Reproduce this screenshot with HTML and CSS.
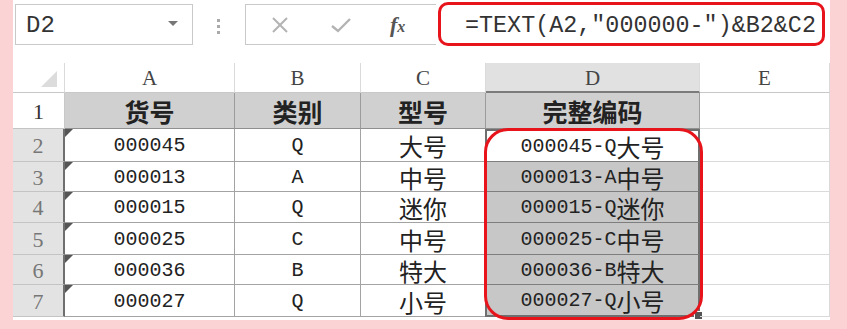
FILE: index.html
```html
<!DOCTYPE html>
<html lang="zh-CN">
<head>
  <meta charset="UTF-8">
  <title>完整编码</title>
  <link rel="stylesheet" href="styles.css">
</head>
<body>
  <div class="panel">
    <!-- 名称框和编辑栏 -->
    <div class="topbar">
      <div class="namebox">
        <span>D2</span>
        <span class="arrow"></span>
      </div>
      <div class="dots"><i></i><i></i><i></i></div>
      <div class="tools">
        <svg class="ico" width="20" height="16" viewBox="0 0 20 16"><path d="M3 1 L17 15 M17 1 L3 15" stroke="#b3b3b3" stroke-width="2" fill="none"/></svg>
        <svg class="ico" width="22" height="16" viewBox="0 0 22 16"><path d="M2 9 L8 14 L20 2" stroke="#b3b3b3" stroke-width="2.4" fill="none"/></svg>
        <span class="fx">f<small>x</small></span>
      </div>
      <div class="formula" lang="en">=TEXT(A2,"000000-")&amp;B2&amp;C2</div>
    </div>

    <!-- 表格区域 -->
    <div class="sheet">
      <div class="c corner"><span class="tri"></span></div>
      <div class="c col">A</div>
      <div class="c col">B</div>
      <div class="c col">C</div>
      <div class="c col col-sel">D</div>
      <div class="c col">E</div>

      <div class="c row row-1">1</div>
      <div class="c t head">货号</div>
      <div class="c t head">类别</div>
      <div class="c t head">型号</div>
      <div class="c t head">完整编码</div>
      <div class="c"></div>

      <div class="c row">2</div>
      <div class="c t flag">000045</div>
      <div class="c t">Q</div>
      <div class="c t zh">大号</div>
      <div class="c t sel first">000045-Q<span class="zh">大号</span></div>
      <div class="c"></div>

      <div class="c row">3</div>
      <div class="c t flag">000013</div>
      <div class="c t">A</div>
      <div class="c t zh">中号</div>
      <div class="c t sel">000013-A<span class="zh">中号</span></div>
      <div class="c"></div>

      <div class="c row">4</div>
      <div class="c t flag">000015</div>
      <div class="c t">Q</div>
      <div class="c t zh">迷你</div>
      <div class="c t sel">000015-Q<span class="zh">迷你</span></div>
      <div class="c"></div>

      <div class="c row">5</div>
      <div class="c t flag">000025</div>
      <div class="c t">C</div>
      <div class="c t zh">中号</div>
      <div class="c t sel">000025-C<span class="zh">中号</span></div>
      <div class="c"></div>

      <div class="c row">6</div>
      <div class="c t flag">000036</div>
      <div class="c t">B</div>
      <div class="c t zh">特大</div>
      <div class="c t sel">000036-B<span class="zh">特大</span></div>
      <div class="c"></div>

      <div class="c row">7</div>
      <div class="c t flag">000027</div>
      <div class="c t">Q</div>
      <div class="c t zh">小号</div>
      <div class="c t sel last">000027-Q<span class="zh">小号</span><span class="handle"></span></div>
      <div class="c"></div>

      <div class="ring"></div>
    </div>
  </div>
</body>
</html>
```

FILE: styles.css
```css
body {
  margin: 0;
  background: #fcd3d4;
  font-family: "Liberation Mono", "Noto Sans CJK SC", monospace;
  color: #222;
}
.panel {
  margin-left: 13px;
  width: 817px;
  height: 320px;
  background: #fff;
}

/* 顶部 */
.topbar {
  height: 63px;
  display: flex;
  align-items: flex-start;
}
.namebox {
  margin: 4px 0 0 2px;
  width: 178px;
  height: 41px;
  box-sizing: border-box;
  border: 1px solid #c9c9c9;
  display: flex;
  align-items: center;
  justify-content: space-between;
  padding: 2px 14px 0 10px;
  font-size: 24px;
  color: #333;
}
.arrow {
  width: 0;
  height: 0;
  border-left: 5px solid transparent;
  border-right: 5px solid transparent;
  border-top: 5px solid #777;
  margin-top: -4px;
}
.dots {
  margin: 19px 0 0 24px;
  width: 4px;
  display: flex;
  flex-direction: column;
  gap: 3px;
}
.dots i {
  width: 3px;
  height: 3px;
  background: #aaa;
}
.tools {
  margin: 4px 0 0 24px;
  width: 191px;
  height: 41px;
  box-sizing: border-box;
  border: 1px solid #c9c9c9;
  border-right: none;
  display: flex;
  align-items: center;
  padding-left: 24px;
  gap: 40px;
}
.fx {
  font-family: "Liberation Serif", serif;
  font-style: italic;
  font-weight: bold;
  font-size: 22px;
  color: #555;
  margin-left: -2px;
}
.fx small {
  font-size: 16px;
}
.formula {
  margin: 2px 0 0 2px;
  width: 387px;
  height: 44px;
  box-sizing: border-box;
  border: 3px solid #e8141c;
  border-radius: 10px;
  padding: 3px 0 0 24px;
  display: flex;
  align-items: center;
  font-size: 23.4px;
  color: #333;
  white-space: nowrap;
}

/* 表格 */
.sheet {
  position: relative;
  display: grid;
  grid-template-columns: 52px 170px 126px 125px 214px 130px;
  grid-template-rows: 30px 36px 33px 30px 31px 32px 30px 32px;
}
.c {
  box-sizing: border-box;
  border-right: 1px solid #dadada;
  border-bottom: 1px solid #dadada;
  display: flex;
  align-items: center;
  justify-content: center;
  font-size: 20px;
  line-height: 1;
  position: relative;
}
.corner {
  border-bottom-color: #c8c8c8;
}
.tri {
  position: absolute;
  right: 7px;
  bottom: 5px;
  width: 0;
  height: 0;
  border-left: 16px solid transparent;
  border-bottom: 16px solid #dcdcdc;
}
.col {
  font-family: "Liberation Serif", serif;
  font-size: 21px;
  color: #444;
  padding-top: 2px;
  border-bottom-color: #c8c8c8;
}
.col-sel {
  background: #e1e1e1;
  border-bottom: 2px solid #7b7b7b;
}
.row {
  font-family: "Liberation Serif", serif;
  font-size: 22px;
  color: #777;
  background: #e3e3e3;
  border-right: 2px solid #6f6f6f;
  border-bottom-color: #c4c4c4;
  padding-top: 2px;
}
.row-1 {
  background: #fff;
  color: #333;
  border-right: 1px solid #c8c8c8;
}
.t {
  border-color: #a3a3a3;
  padding-top: 2px;
}
.head {
  background: #d0d0d0;
  font-family: "Noto Sans CJK SC", sans-serif;
  font-weight: bold;
  font-size: 25px;
  color: #222;
  border-color: #9c9c9c;
  border-bottom-color: #8f8f8f;
}
.zh {
  font-family: "Noto Sans CJK SC", sans-serif;
  font-size: 24px;
  line-height: 1;
}
.flag::before {
  content: "";
  position: absolute;
  left: 0;
  top: 0;
  border-top: 8px solid #555;
  border-right: 8px solid transparent;
}
.sel {
  background: #c7c7c7;
  border-left: 2px solid #6f6f6f;
  border-right: 2px solid #6f6f6f;
  border-bottom-color: #7e7e7e;
  margin-left: -1px;
}
.first {
  background: #fff;
  border-top: 2px solid #6f6f6f;
}
.last {
  border-bottom: 2px solid #6f6f6f;
}
.handle {
  position: absolute;
  right: -5px;
  bottom: -5px;
  width: 7px;
  height: 7px;
  background: #555;
  border: 1px solid #fff;
}
.ring {
  position: absolute;
  left: 471px;
  top: 65px;
  width: 219px;
  height: 192px;
  box-sizing: border-box;
  border: 3px solid #e8141c;
  border-radius: 24px;
}
```
